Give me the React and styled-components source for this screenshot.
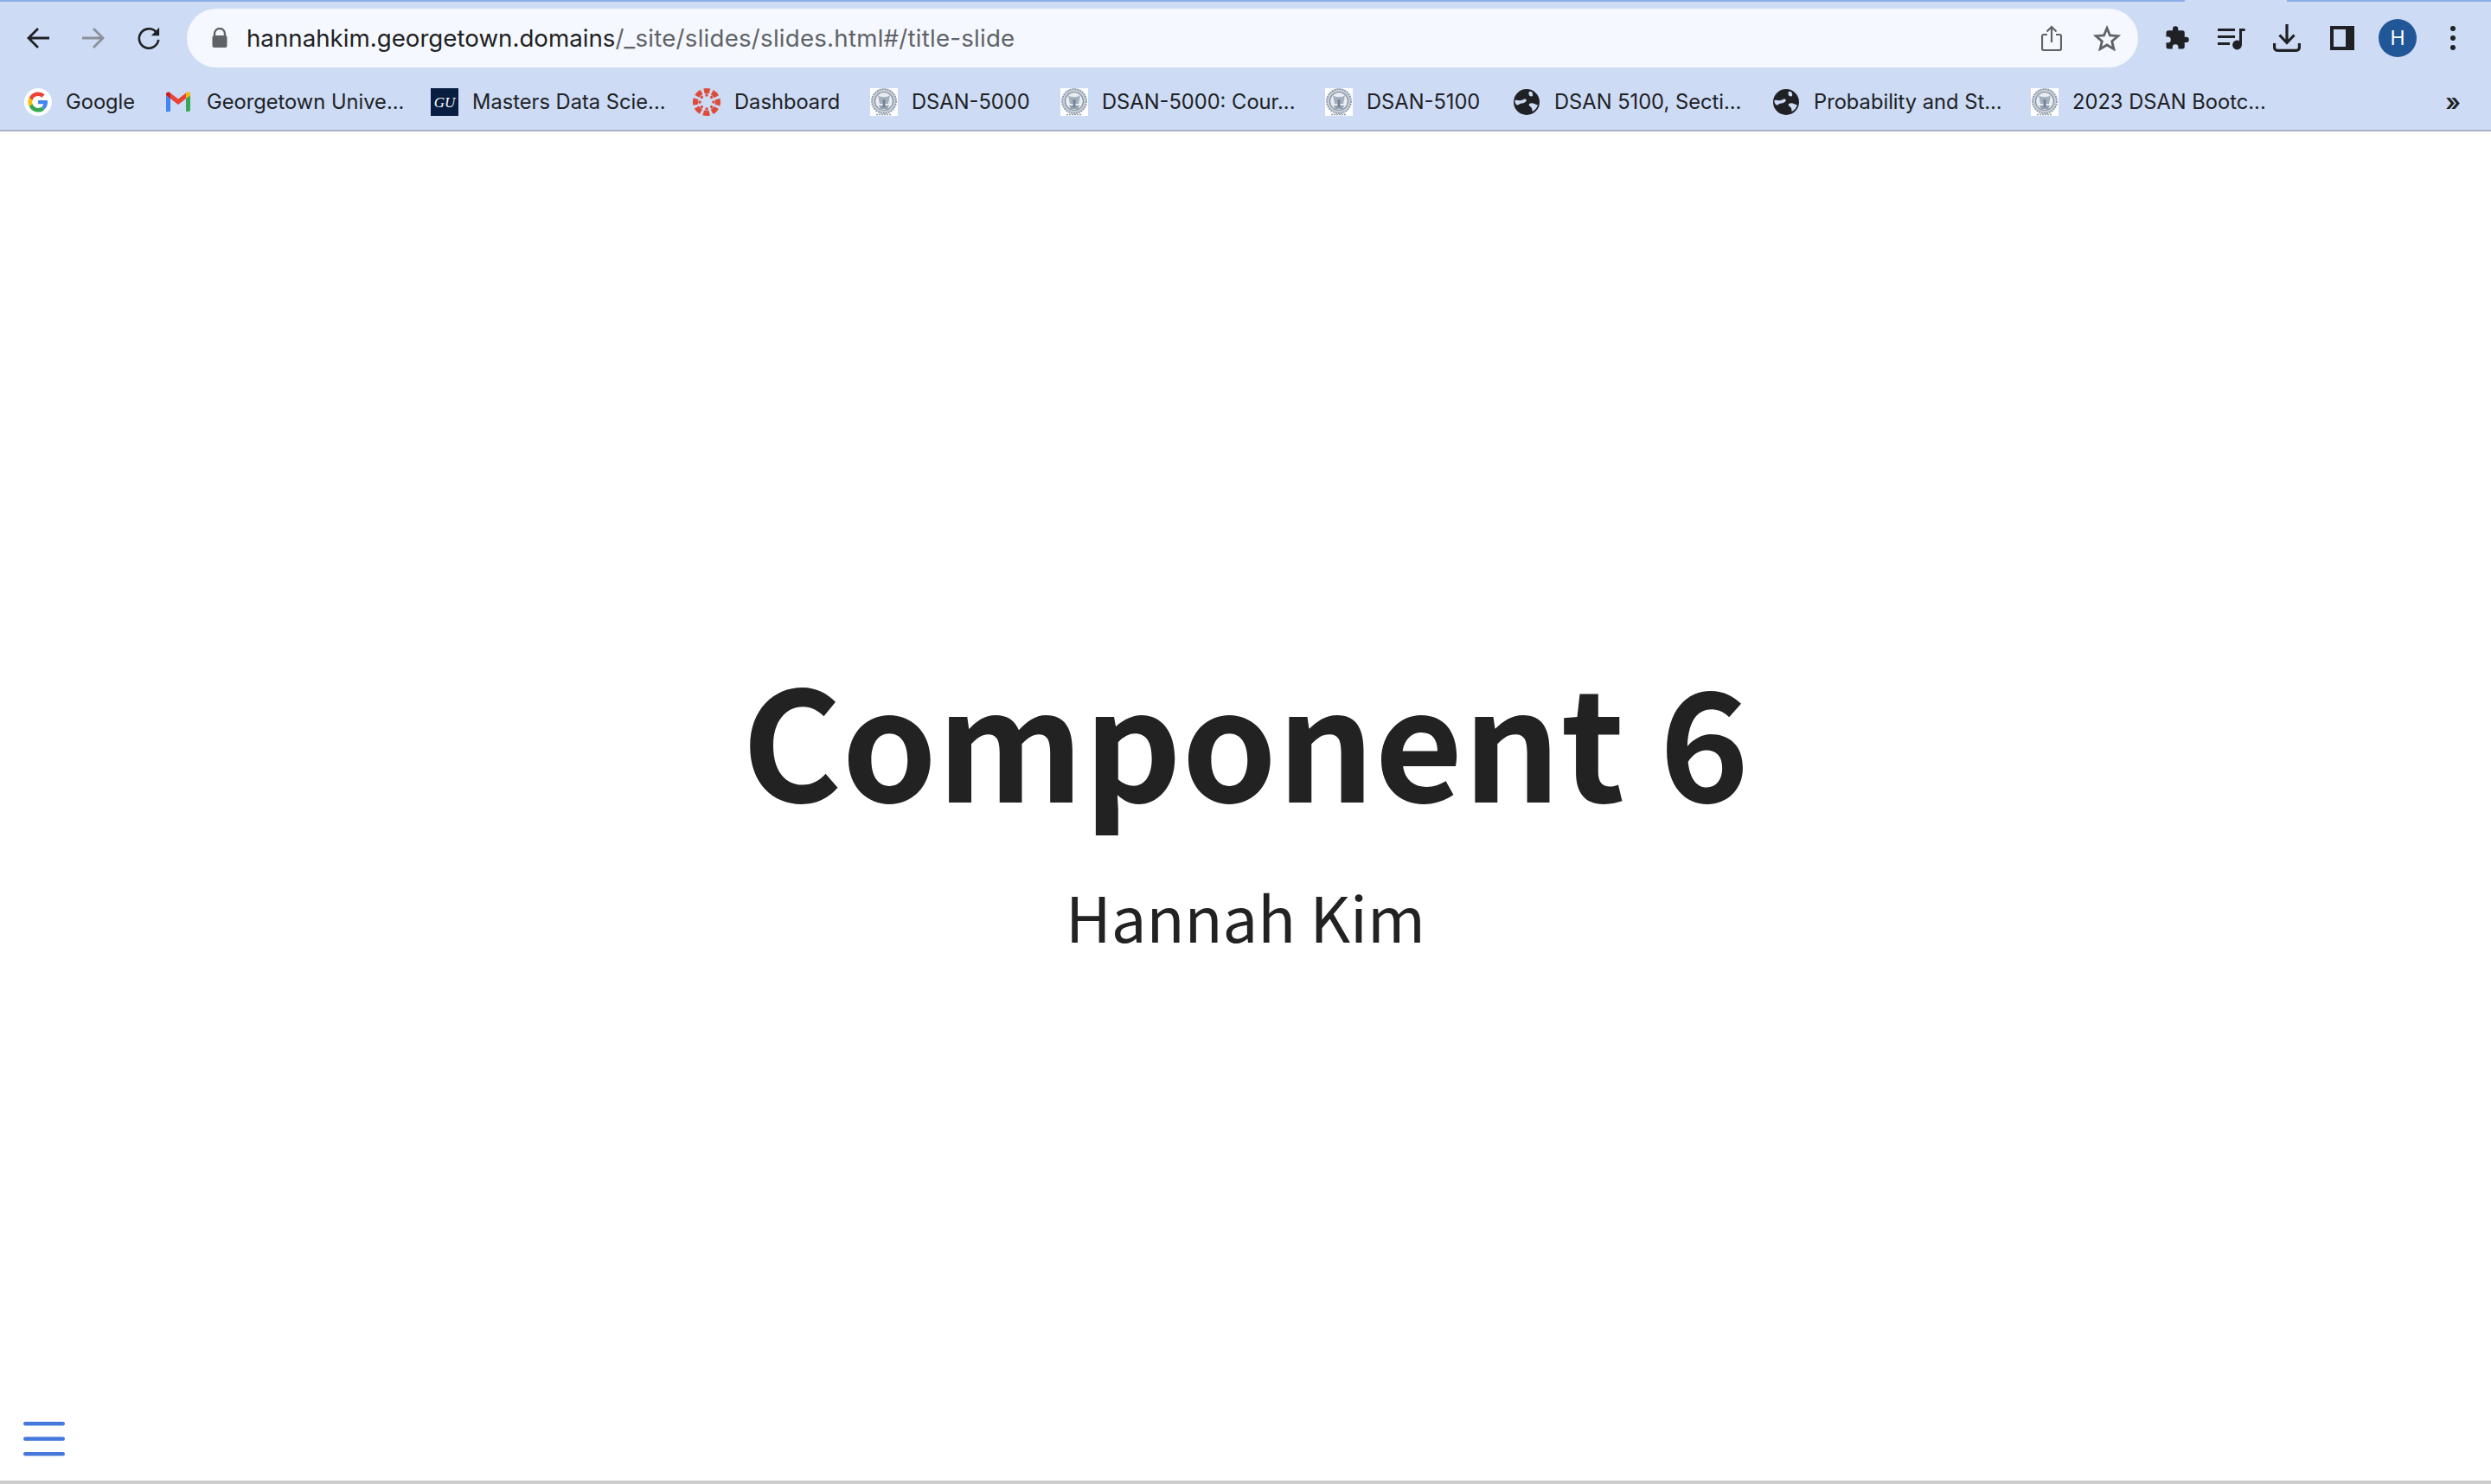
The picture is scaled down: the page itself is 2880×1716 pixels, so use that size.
import React from 'react';
import styled, { createGlobalStyle } from 'styled-components';

const Global = createGlobalStyle`
  html, body { margin: 0; padding: 0; background: #fff; }
  #root { width: 2880px; height: 1716px; }
`;
const Page = styled.div`
  width: 2880px; height: 1716px; display: flex; flex-direction: column; overflow: hidden; background: #fff;
`;
const Chrome = styled.header`
  background: #cddbf5; border-bottom: 2px solid #a9b3c9; flex: none; display: flex; flex-direction: column; height: 152px; box-sizing: border-box;
`;
const TabStrip = styled.div`
  height: 2px; display: flex; flex: none; justify-content: space-between;
`;
const TabEdge = styled.div`
  background: #8aaee6; height: 2px; width: ${p => p.$w}px;
`;
const Toolbar = styled.div`
  height: 68px; margin-top: 8px; display: flex; align-items: center; flex: none;
`;
const NavButton = styled.div`
  width: ${p => p.$w || 28}px; height: 40px; margin-left: ${p => p.$ml || 0}px; display: flex; align-items: center; justify-content: center; flex: none;
`;
const Omnibox = styled.div`
  margin-left: 30px; width: 2256px; height: 68px; border-radius: 34px; background: #f5f8fe; display: flex; align-items: center; flex: none; box-sizing: border-box; padding: 0 20px 0 29px;
`;
const Url = styled.div`
  margin-left: 22px; font: 400 27.7px/68px Inter, "Liberation Sans", sans-serif; color: #202124; white-space: nowrap; flex: 1;
  span { color: #5f6368; letter-spacing: 0.22px; }
`;
const Avatar = styled.div`
  width: 44px; height: 44px; border-radius: 50%; background: #215796; color: #fff; display: flex; align-items: center; justify-content: center; font: 400 23px Inter, sans-serif; margin-left: 28px; flex: none;
`;
const Bookmarks = styled.nav`
  display: flex; align-items: center; height: 32px; margin-top: 24px; padding-left: 28px; flex: none;
`;
const Bookmark = styled.div`
  display: flex; align-items: center; margin-right: ${p => p.$mr}px; flex: none;
`;
const Favicon = styled.div`
  width: 32px; height: 32px; flex: none; display: flex; margin-right: 16px; align-items: center; justify-content: center;
`;
const Label = styled.span`
  font: 400 23.7px/32px Inter, "Liberation Sans", sans-serif; color: #202124; white-space: nowrap; display: block; width: ${p => p.$w}px;
`;
const More = styled.span`
  margin-left: auto; margin-right: 35px; font: 600 28px/32px Inter, sans-serif; color: #202124;
`;
const Slide = styled.main`
  flex: 1; display: flex; flex-direction: column; align-items: center; padding-top: 590px; box-sizing: border-box; min-height: 0;
`;
const Title = styled.h1`
  margin: 0; font: 700 176px/220px "Noto Sans CJK SC", "Noto Sans", sans-serif; color: #222; white-space: nowrap;
`;
const Author = styled.p`
  margin: 47px 0 0; font: 400 72.300px/100px "Noto Sans CJK SC", "Noto Sans", sans-serif; color: #222; white-space: nowrap;
`;
const MenuRow = styled.div`
  flex: none; height: 72px; padding: 4px 0 0 27px; box-sizing: border-box;
  svg { display: block; }
`;
const Rule = styled.div`
  flex: none; height: 4px; background: #ccc;
`;

const Seal = () => (
  <svg width="32" height="32" viewBox="0 0 32 32">
    <rect width="32" height="32" fill="#fff" />
    <circle cx="16" cy="15" r="14" fill="#c9d0d8" stroke="#8f9cab" strokeWidth="2" strokeDasharray="2 1" />
    <circle cx="16" cy="15" r="10.500" fill="#e9ecf0" stroke="#8391a3" strokeWidth="1.200" />
    <path d="M9 8c3 3 11 3 14 0l-2 10h-10z" fill="#a3afbc" />
    <path d="M10 20h12l-2 4h-8z" fill="#93a0af" />
    <rect x="14.500" y="13" width="3" height="9" fill="#74849a" />
    <path d="M7 30.500h18" stroke="#8d9aa8" strokeWidth="1.400" strokeDasharray="2 1" />
  </svg>
);
const Globe = () => (
  <svg width="32" height="32" viewBox="0 0 32 32">
    <circle cx="16" cy="16" r="15" fill="#202124" />
    <path d="M2.500 14c3-.5 5 .5 7 0s3-2 5-1.500 1.500 2.500 0 3.500-3 1.500-4.500 1.500c-2.500.5-3.500 2-4.500 2s-3.500-2-3-5.500z" fill="#cddbf5" />
    <path d="M19.500 4c2-.5 3 .5 3.500 2.500s0 3-1.500 3-3-1-3-3 0-2.500 1-2.500z" fill="#cddbf5" />
    <path d="M19 18c2.500-1 4.500-1 6 0s3 1.500 4 1c-1 4-3.500 6.500-6.500 8 0-2 0-3-1-4.500s-3.500-2.500-2.500-4.500z" fill="#cddbf5" />
  </svg>
);
const GoogleIcon = () => (
  <svg width="32" height="32" viewBox="0 0 32 32">
    <circle cx="16" cy="16" r="16" fill="#fff" />
    <g transform="translate(16 16) scale(1.15) translate(-16 -16)">
      <path d="M25.600 16.300c0-.8-.1-1.400-.2-2H16v3.700h5.400c-.2 1.200-.9 2.300-2 3l3.100 2.400c1.900-1.700 3.100-4.200 3.100-7.100z" fill="#4285f4" />
      <path d="M16 26c2.700 0 5-.9 6.500-2.500l-3.100-2.400c-.9.600-2 1-3.400 1-2.600 0-4.800-1.800-5.600-4.100H7.200v2.500C8.800 23.800 12.100 26 16 26z" fill="#34a853" />
      <path d="M10.400 18c-.2-.6-.3-1.300-.3-2s.1-1.400.3-2v-2.500H7.200C6.400 12.900 6 14.400 6 16s.4 3.100 1.200 4.500z" fill="#fbbc05" />
      <path d="M16 9.900c1.500 0 2.800.5 3.800 1.500l2.800-2.800C20.900 7 18.700 6 16 6c-3.900 0-7.200 2.200-8.800 5.500l3.200 2.500c.8-2.300 3-4.100 5.600-4.100z" fill="#ea4335" />
    </g>
  </svg>
);
const GmailIcon = () => (
  <svg width="32" height="32" viewBox="0 0 32 32">
    <g transform="translate(-1 0)">
      <path d="M2 27V8l5 4v15H4.500A2.500 2.500 0 0 1 2 27z" fill="#4285f4" />
      <path d="M25 27V12l5-4v16.500a2.500 2.500 0 0 1-2.500 2.500z" fill="#34a853" />
      <path d="M7 12 2 8V7c0-2.200 2.500-3.400 4.300-2L16 12.500 25.700 5C27.500 3.600 30 4.800 30 7v1l-5 4-9 7z" fill="#ea4335" />
      <path d="M25 12l5-4V7c0-2.200-2.500-3.400-4.300-2L25 5.500z" fill="#fbbc05" />
      <path d="M7 12 2 8V7c0-2.200 2.500-3.400 4.300-2L7 5.500z" fill="#c5221f" />
    </g>
  </svg>
);
const GuIcon = () => (
  <svg width="32" height="32" viewBox="0 0 32 32">
    <rect width="32" height="32" fill="#071d41" />
    <text x="16" y="21.500" textAnchor="middle" fontFamily="Liberation Serif, serif" fontStyle="italic" fontSize="17" fill="#fff">GU</text>
  </svg>
);
const DOT_ANGLES = [0, 45, 90, 135, 180, 225, 270, 315];
const CanvasIcon = () => (
  <svg width="32" height="32" viewBox="0 0 32 32" fill="#dd4b39">
    <circle cx="16" cy="16" r="13" fill="none" stroke="#dd4b39" strokeWidth="6" strokeDasharray="7.200 3.010" strokeDashoffset="3.600" transform="rotate(-90 16 16)" />
    {DOT_ANGLES.map(a => <circle key={a} cx="16" cy="8" r="1.700" transform={`rotate(${a} 16 16)`} />)}
  </svg>
);

const BOOKMARKS = [
  { icon: <GoogleIcon />, label: 'Google', w: 81, mr: 34 },
  { icon: <GmailIcon />, label: 'Georgetown Unive...', w: 226, mr: 33 },
  { icon: <GuIcon />, label: 'Masters Data Scie...', w: 222, mr: 33 },
  { icon: <CanvasIcon />, label: 'Dashboard', w: 123, mr: 34 },
  { icon: <Seal />, label: 'DSAN-5000', w: 138, mr: 34 },
  { icon: <Seal />, label: 'DSAN-5000: Cour...', w: 224, mr: 34 },
  { icon: <Seal />, label: 'DSAN-5100', w: 134, mr: 35 },
  { icon: <Globe />, label: 'DSAN 5100, Secti...', w: 219, mr: 33 },
  { icon: <Globe />, label: 'Probability and St...', w: 219, mr: 32 },
  { icon: <Seal />, label: '2023 DSAN Bootc...', w: 222, mr: 0 },
];

export default function App() {
  return (
    <Page>
      <Global />
      <Chrome>
        <TabStrip><TabEdge $w={2526} /><TabEdge $w={236} /></TabStrip>
        <Toolbar>
          <NavButton $ml={30}>
            <svg width="28" height="26" viewBox="0 0 28 26" fill="none" stroke="#202124" strokeWidth="2.800"><path d="M27 13H3M14 2 3 13l11 11" /></svg>
          </NavButton>
          <NavButton $ml={36}>
            <svg width="28" height="26" viewBox="0 0 28 26" fill="none" stroke="#8b9099" strokeWidth="2.800"><path d="M1 13h24M14 2l11 11-11 11" /></svg>
          </NavButton>
          <NavButton $ml={36}>
            <svg width="30" height="28" viewBox="0 0 30 28" fill="none"><path d="M24 6.500A12 12 0 1 0 27 16" stroke="#202124" strokeWidth="2.800" /><path d="M28 1v10H18z" fill="#202124" /></svg>
          </NavButton>
          <Omnibox>
            <svg width="18" height="24" viewBox="0 0 18 24" fill="#5f6368"><path d="M3 9V7a6 6 0 0 1 12 0v2" fill="none" stroke="#5f6368" strokeWidth="2.400" /><rect x="0.500" y="9" width="17" height="14" rx="2" /></svg>
            <Url>hannahkim.georgetown.domains<span>/_site/slides/slides.html#/title-slide</span></Url>
            <NavButton $w={24}>
              <svg width="24" height="30" viewBox="0 0 24 30" fill="none" stroke="#5f6368" strokeWidth="2.200"><path d="M7 11H3a2 2 0 0 0-2 2v14a2 2 0 0 0 2 2h18a2 2 0 0 0 2-2V13a2 2 0 0 0-2-2h-4M12 20V2M6.500 7.500 12 2l5.500 5.500" /></svg>
            </NavButton>
            <NavButton $w={32} $ml={36}>
              <svg width="32" height="30" viewBox="0 0 32 30" fill="none" stroke="#5f6368" strokeWidth="2.800"><path d="M16 3.500 19.500 12l9.200.7-7 6 2.200 9L16 23l-7.900 4.700 2.200-9-7-6 9.200-.7z" /></svg>
            </NavButton>
          </Omnibox>
          <NavButton $w={30} $ml={30}>
            <svg width="30" height="30" viewBox="0 0 24 24" fill="#202124"><path d="M20.500 11H19V7a2 2 0 0 0-2-2h-4V3.500a2.500 2.500 0 0 0-5 0V5H4a2 2 0 0 0-2 2v3.800h1.500a2.700 2.700 0 0 1 0 5.400H2V20a2 2 0 0 0 2 2h3.800v-1.500a2.700 2.700 0 0 1 5.400 0V22H17a2 2 0 0 0 2-2v-4h1.500a2.500 2.500 0 0 0 0-5z" /></svg>
          </NavButton>
          <NavButton $w={32} $ml={32}>
            <svg width="32" height="27" viewBox="0 0 32 27" fill="#202124"><rect x="0" y="2" width="20" height="3" /><rect x="0" y="10" width="20" height="3" /><rect x="0" y="18" width="14" height="3" /><rect x="25" y="2" width="3" height="19" /><path d="M25 2h5.500a1.500 1.500 0 0 1 0 3H25z" /><circle cx="22.500" cy="21" r="5.400" /></svg>
          </NavButton>
          <NavButton $w={32} $ml={32}>
            <svg width="32" height="32" viewBox="0 0 32 32" fill="none" stroke="#202124" strokeWidth="3.200"><path d="M16 0v22M7.500 12.500 16 21.500l8.500-9" /><path d="M1.600 22v5a3.400 3.400 0 0 0 3.400 3.400h22a3.400 3.400 0 0 0 3.400-3.400v-5" /></svg>
          </NavButton>
          <NavButton $w={28} $ml={34}>
            <svg width="28" height="28" viewBox="0 0 28 28" fill="#202124"><path fillRule="evenodd" d="M0 0h28v28H0zM4 4v20h14V4z" /></svg>
          </NavButton>
          <Avatar>H</Avatar>
          <NavButton $w={10} $ml={37}>
            <svg width="8" height="30" viewBox="0 0 8 30" fill="#202124"><circle cx="4" cy="4" r="3" /><circle cx="4" cy="15" r="3" /><circle cx="4" cy="26" r="3" /></svg>
          </NavButton>
        </Toolbar>
        <Bookmarks>
          {BOOKMARKS.map(b => (
            <Bookmark key={b.label} $mr={b.mr}>
              <Favicon>{b.icon}</Favicon>
              <Label $w={b.w}>{b.label}</Label>
            </Bookmark>
          ))}
          <More>»</More>
        </Bookmarks>
      </Chrome>
      <Slide>
        <Title>Component 6</Title>
        <Author>Hannah Kim</Author>
      </Slide>
      <MenuRow>
        <svg width="48" height="42" viewBox="0 0 48 42" fill="#4478dc"><rect y="0" width="48" height="4.600" rx="2.300" /><rect y="17.500" width="48" height="4.600" rx="2.300" /><rect y="35" width="48" height="4.600" rx="2.300" /></svg>
      </MenuRow>
      <Rule />
    </Page>
  );
}
